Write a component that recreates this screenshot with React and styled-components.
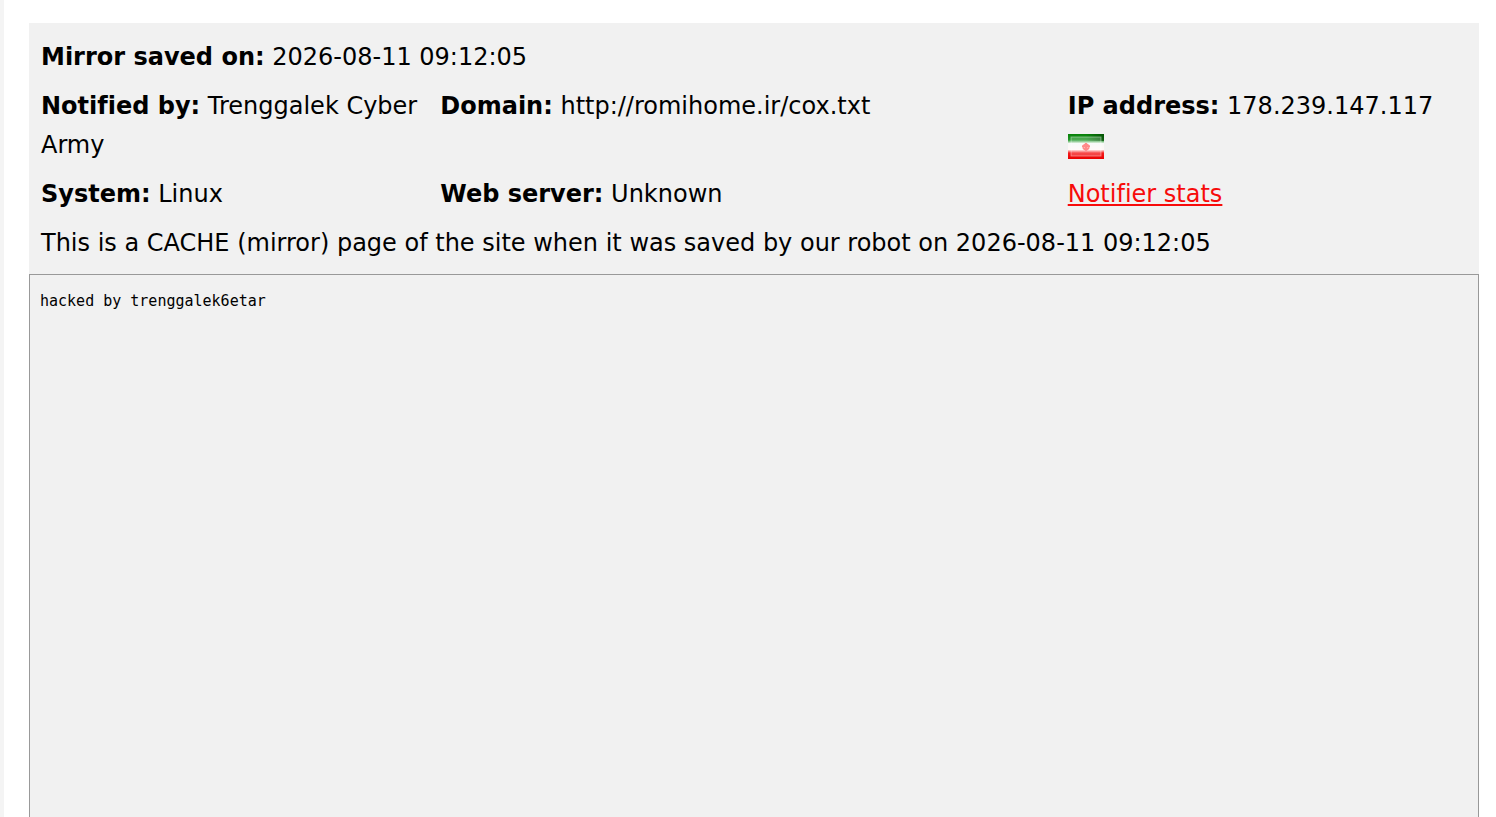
import React from "react";
import styled, { createGlobalStyle } from "styled-components";

const GlobalStyle = createGlobalStyle`
  * { box-sizing: border-box; }
  body {
    margin: 0;
    background: #f4f4f4;
    color: #000;
    font-family: Verdana, "DejaVu Sans", sans-serif;
    font-size: 24px;
    line-height: 39px;
    font-variant-ligatures: none;
  }
`;

const Page = styled.main`
  display: flex;
  flex-direction: column;
  min-height: 100vh;
  margin-left: 4px;
  padding: 23px 17px 0 25px;
  background: #fff;
`;

const Details = styled.section`
  display: grid;
  grid-template-columns: 28fr 44fr 28fr;
  padding: 10px 12px 6px;
  background: #f1f1f1;
`;

const Field = styled.div`
  grid-column: ${(p) => (p.$wide ? "1 / -1" : "auto")};
  min-width: 0;
  padding: 5px 0;
`;

const StatsLink = styled.a`
  color: #f70b0b;
  text-decoration: underline;
`;

const Flag = styled.svg`
  display: block;
  width: 36px;
  height: 25px;
  margin-top: 8px;
`;

const Mirror = styled.section`
  flex: 1;
  padding: 16px 10px;
  border: 1px solid #999;
  border-bottom: 0;
  background: #f1f1f1;
`;

const CachedText = styled.pre`
  margin: 0;
  font-family: "DejaVu Sans Mono", monospace;
  font-size: 15px;
  line-height: 20px;
`;

function IranFlag() {
  return (
    <Flag viewBox="0 0 36 25" role="img" aria-label="Iran">
      <defs>
        <linearGradient id="stripes" x1="0" y1="0" x2="0" y2="1">
          <stop offset="0" stopColor="#068006" />
          <stop offset="0.24" stopColor="#22982a" />
          <stop offset="0.38" stopColor="#f7f9f7" />
          <stop offset="0.62" stopColor="#fff7f7" />
          <stop offset="0.76" stopColor="#f51b1b" />
          <stop offset="1" stopColor="#e90000" />
        </linearGradient>
        <linearGradient id="shade" x1="0" y1="0" x2="1" y2="0">
          <stop offset="0.5" stopColor="#003b00" stopOpacity="0" />
          <stop offset="1" stopColor="#003b00" stopOpacity="0.65" />
        </linearGradient>
        <filter id="soft"><feGaussianBlur stdDeviation="0.7" /></filter>
      </defs>
      <rect width="36" height="25" fill="url(#stripes)" />
      <rect width="36" height="7" fill="url(#shade)" />
      <g filter="url(#soft)">
        <rect x="3" y="3" width="30" height="19" fill="#fff" opacity="0.2" />
        <rect x="3" y="3" width="30" height="19" fill="none" stroke="#fff" strokeWidth="1" opacity="0.4" />
        <path d="M18 9v8M14 12.500h8M15 12l3-2 3 2M15 14l3 2 3-2" fill="none" stroke="#ff8a8a" strokeWidth="2" />
      </g>
    </Flag>
  );
}

export default function App() {
  return (
    <>
      <GlobalStyle />
      <Page>
        <Details>
          <Field $wide><strong>Mirror saved on:</strong> 2026-08-11 09:12:05</Field>
          <Field><strong>Notified by:</strong> Trenggalek Cyber Army</Field>
          <Field><strong>Domain:</strong> http://romihome.ir/cox.txt</Field>
          <Field>
            <strong>IP address:</strong> 178.239.147.117
            <IranFlag />
          </Field>
          <Field><strong>System:</strong> Linux</Field>
          <Field><strong>Web server:</strong> Unknown</Field>
          <Field><StatsLink href="#notifier-stats">Notifier stats</StatsLink></Field>
          <Field $wide>
            This is a CACHE (mirror) page of the site when it was saved by our robot on 2026-08-11 09:12:05
          </Field>
        </Details>
        <Mirror>
          <CachedText>hacked by trenggalek6etar</CachedText>
        </Mirror>
      </Page>
    </>
  );
}
